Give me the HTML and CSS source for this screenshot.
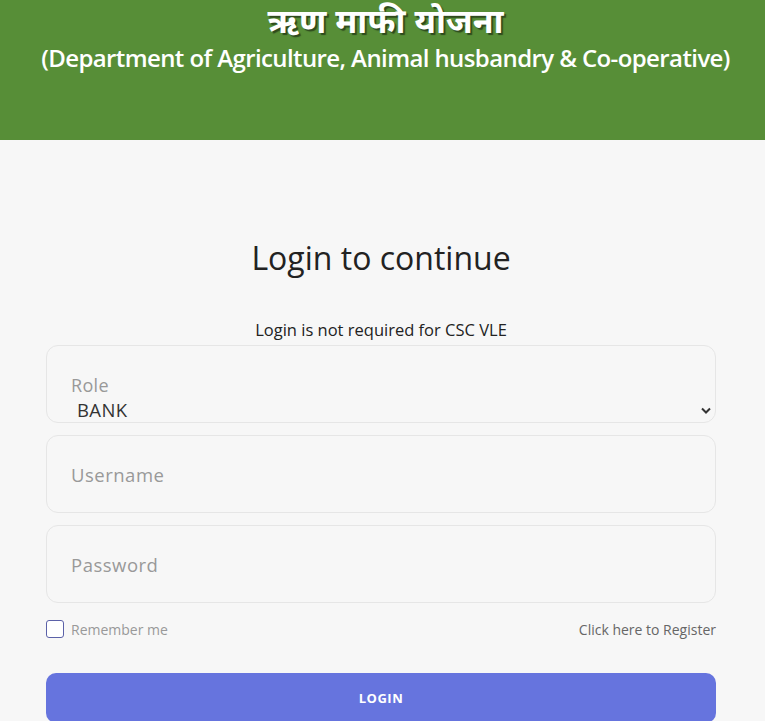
FILE: index.html
```html
<!DOCTYPE html>
<html lang="hi">

<head>
  <meta charset="UTF-8">
  <title>ऋण माफी योजना - Login</title>
  <link rel="stylesheet" href="styles.css">
</head>

<body>
  <header class="banner">
    <h1 class="banner-title">ऋण माफी योजना</h1>
    <p class="banner-sub">(Department of Agriculture, Animal husbandry &amp; Co-operative)</p>
  </header>

  <main class="login">
    <h2 class="login-title">Login to continue</h2>
    <p class="login-note">Login is not required for CSC VLE</p>

    <form class="login-form">
      <label class="field field-select">
        <span class="field-label">Role</span>
        <select class="field-control">
          <option>BANK</option>
          <option>CSC</option>
        </select>
        <svg class="field-arrow" width="10" height="7" viewBox="0 0 10 7">
          <path d="M1 1.5 L5 5.5 L9 1.5" fill="none" stroke="#333" stroke-width="2" />
        </svg>
      </label>

      <div class="field">
        <input class="field-input" type="text" placeholder="Username">
      </div>

      <div class="field">
        <input class="field-input" type="password" placeholder="Password">
      </div>

      <div class="login-row">
        <label class="remember">
          <span class="remember-box"></span>
          Remember me
        </label>
        <a class="register" href="#">Click here to Register</a>
      </div>

      <button class="login-btn" type="button">LOGIN</button>
    </form>
  </main>
</body>

</html>
```

FILE: styles.css
```css
body {
  margin: 0;
  background: #f7f7f7;
  font-family: "Open Sans", "Noto Sans", sans-serif;
  color: #222;
}

/* Bandeau vert */
.banner {
  background: #578e37;
  height: 140px;
  box-sizing: border-box;
  padding: 0 0 0 6px;
  text-align: center;
  color: #fff;
}

.banner-title {
  margin: 0;
  font-family: "Noto Sans", "Noto Sans Devanagari", sans-serif;
  font-size: 34px;
  font-weight: 700;
  line-height: 40px;
  text-shadow: 2px 2px 1px #2e4a1d;
}

.banner-sub {
  margin: 0;
  font-family: "Open Sans", sans-serif;
  font-size: 24px;
  font-weight: 600;
  letter-spacing: -0.6px;
  line-height: 36px;
}

/* Formulaire */
.login {
  width: 670px;
  margin: 0 0 0 46px;
  padding-top: 97px;
}

.login-title {
  margin: 0;
  text-align: center;
  font-size: 32px;
  font-weight: 400;
  line-height: 42px;
  color: #222;
}

.login-note {
  margin: 41px 0 0;
  text-align: center;
  font-size: 16.5px;
  line-height: 20px;
  color: #222;
}

.login-form {
  margin-top: 5px;
  display: flex;
  flex-direction: column;
  gap: 12px;
}

.field {
  position: relative;
  display: block;
  height: 78px;
  box-sizing: border-box;
  border: 1px solid #e6e6e6;
  border-radius: 12px;
  background: #f7f7f7;
}

.field-select {
  padding: 27px 0 0 24px;
}

.field-label {
  display: block;
  font-size: 18px;
  line-height: 24px;
  letter-spacing: 0.3px;
  color: #999;
}

.field-control {
  appearance: none;
  border: 0;
  background: transparent;
  font: inherit;
  font-size: 18.5px;
  letter-spacing: 0.4px;
  color: #333;
  padding: 0 0 0 6px;
  margin: 0;
  width: 100%;
  outline: none;
}

.field-arrow {
  position: absolute;
  right: 4px;
  bottom: 8px;
}

.field-input {
  width: 100%;
  height: 100%;
  box-sizing: border-box;
  border: 0;
  background: transparent;
  padding: 0 24px;
  font: inherit;
  font-size: 18.5px;
  letter-spacing: 0.5px;
  color: #333;
  outline: none;
}

.field-input::placeholder {
  color: #999;
}

.login-row {
  display: flex;
  justify-content: space-between;
  align-items: center;
  margin-top: 1px;
  height: 26px;
}

.remember {
  display: flex;
  align-items: center;
  gap: 7px;
  font-size: 14px;
  color: #999;
}

.remember-box {
  width: 16px;
  height: 16px;
  border: 1px solid #5b61a8;
  border-radius: 3px;
  background: #fff;
}

.register {
  font-size: 14px;
  color: #666;
  text-decoration: none;
}

.login-btn {
  margin-top: 19px;
  height: 50px;
  border: 0;
  border-radius: 10px;
  background: #6674de;
  color: #fff;
  font: inherit;
  font-size: 13px;
  font-weight: 700;
  letter-spacing: 0.5px;
}
```
